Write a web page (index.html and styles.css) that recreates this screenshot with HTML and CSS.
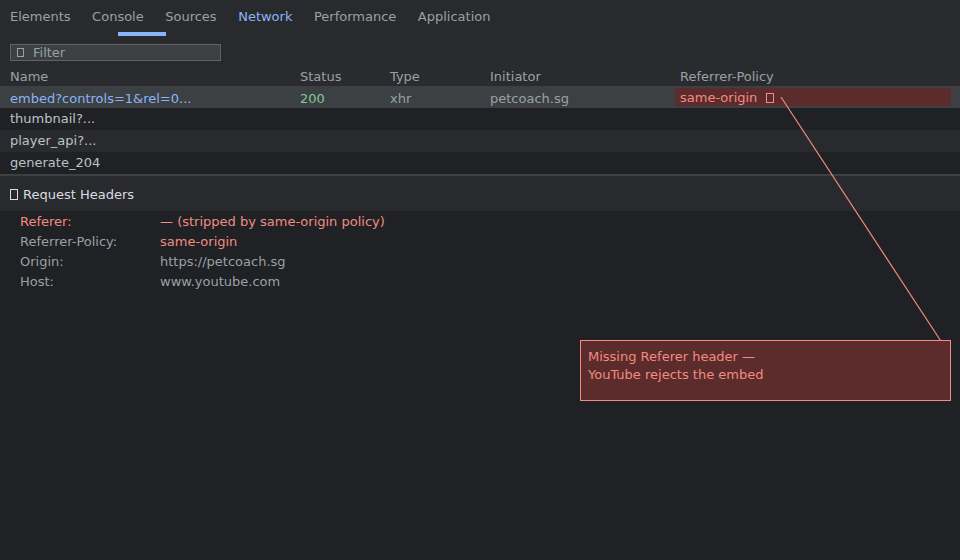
FILE: index.html
```html
<!DOCTYPE html>
<html lang="en">
<head>
<meta charset="utf-8">
<title>Network</title>
<link rel="stylesheet" href="styles.css">
</head>
<body>
<div class="devtools">
  <nav class="tabs">
    <span class="tab">Elements</span>
    <span class="tab">Console</span>
    <span class="tab">Sources</span>
    <span class="tab active">Network</span>
    <span class="tab">Performance</span>
    <span class="tab">Application</span>
    <span class="tab-indicator"></span>
  </nav>
  <div class="toolbar">
    <div class="filter"><span class="tofu"></span>Filter</div>
  </div>
  <div class="table">
    <div class="row head">
      <span>Name</span><span>Status</span><span>Type</span><span>Initiator</span><span>Referrer-Policy</span>
    </div>
    <div class="row selected">
      <span class="name-link">embed?controls=1&amp;rel=0...</span>
      <span class="ok">200</span>
      <span>xhr</span>
      <span>petcoach.sg</span>
      <span class="bad-cell">same-origin <span class="tofu tofu-red"></span></span>
    </div>
    <div class="row"><span class="name">thumbnail?...</span></div>
    <div class="row alt"><span class="name">player_api?...</span></div>
    <div class="row"><span class="name">generate_204</span></div>
  </div>
  <section class="headers">
    <div class="section-title"><span class="tofu"></span>Request Headers</div>
    <div class="kv">
      <span class="k warn">Referer:</span><span class="v warn">— (stripped by same-origin policy)</span>
      <span class="k">Referrer-Policy:</span><span class="v warn">same-origin</span>
      <span class="k">Origin:</span><span class="v">https://petcoach.sg</span>
      <span class="k">Host:</span><span class="v">www.youtube.com</span>
    </div>
  </section>
  <svg class="leader" width="960" height="560" viewBox="0 0 960 560">
    <line x1="781" y1="97" x2="940.5" y2="340.5" stroke="#f28b82" stroke-width="1.2"/>
  </svg>
  <div class="callout">Missing Referer header —<br>YouTube rejects the embed</div>
</div>
</body>
</html>
```

FILE: styles.css
```css
* { box-sizing: border-box; }
html, body {
  margin: 0;
  padding: 0;
  background: #202124;
}
body {
  font-family: "DejaVu Sans", sans-serif;
  font-size: 13px;
  color: #9aa0a6;
}
.devtools {
  position: relative;
  width: 960px;
  height: 560px;
  overflow: hidden;
  background: #202124;
}
.tabs {
  position: relative;
  display: flex;
  gap: 21.5px;
  height: 36px;
  padding: 8px 0 0 10px;
  background: #292a2d;
  line-height: 17px;
}
.tab { color: #9aa0a6; white-space: nowrap; }
.tab.active { color: #8ab4f8; }
.tab-indicator {
  position: absolute;
  left: 118px;
  top: 32px;
  width: 48px;
  height: 4px;
  background: #8ab4f8;
}
.toolbar {
  height: 28px;
  padding: 8px 0 0 10px;
  background: #292a2d;
}
.filter {
  display: flex;
  align-items: center;
  width: 211px;
  height: 17px;
  padding-left: 6px;
  background: #3c4043;
  border: 1px solid #5f6368;
  color: #9aa0a6;
  line-height: 15px;
}
.filter .tofu { width: 7px; height: 9px; margin-right: 9px; border-color: #9aa0a6; }
.tofu {
  display: inline-block;
  width: 7px;
  height: 10px;
  border: 1px solid currentColor;
  vertical-align: middle;
}
.table { display: flex; flex-direction: column; }
.row {
  display: grid;
  grid-template-columns: 290px 90px 100px 190px 1fr;
  align-items: center;
  height: 22px;
  padding: 0 0 0 10px;
  line-height: 18px;
  white-space: nowrap;
  background: #202124;
}
.row.head { background: #2a2b2e; color: #9aa0a6; padding-top: 4px; }
.row.selected { background: #3c4043; padding-top: 4px; }
.row.alt { background: #292a2d; }
.name-link { color: #8ab4f8; }
.name { color: #bdc1c6; }
.ok { color: #81c995; }
.bad-cell {
  align-self: start;
  margin: -2px 9px 0 -5px;
  padding: 2px 0 0 5px;
  height: 18px;
  line-height: 16px;
  background: #5c2b2b;
  color: #f28b82;
}
.tofu-red { width: 8px; height: 10px; margin-left: 5px; position: relative; top: -1px; }
.headers {
  border-top: 2px solid #3c4043;
}
.section-title {
  display: flex;
  align-items: center;
  height: 35px;
  padding: 2px 0 0 10px;
  background: #292a2d;
  color: #dadce0;
}
.section-title .tofu { width: 8px; height: 11px; margin-right: 5px; }
.kv {
  display: grid;
  grid-template-columns: 140px 1fr;
  padding: 1px 0 0 20px;
  line-height: 20px;
}
.k { color: #9aa0a6; }
.v { color: #9aa0a6; }
.warn { color: #f28b82; }
.leader {
  position: absolute;
  left: 0;
  top: 0;
  pointer-events: none;
}
.callout {
  position: absolute;
  left: 580px;
  top: 340px;
  width: 371px;
  height: 61px;
  padding: 7px 7px;
  background: #5c2b2b;
  border: 1px solid #f28b82;
  color: #f28b82;
  line-height: 18px;
}
```
